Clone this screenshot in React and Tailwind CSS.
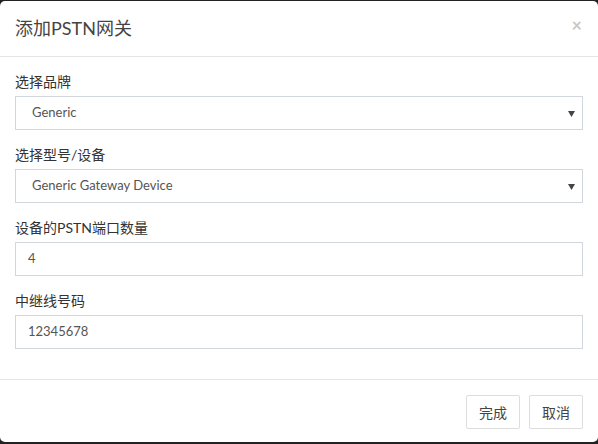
import React from "react";

const font = { fontFamily: '"Lato", "Noto Sans CJK SC", sans-serif' };

function Label({ children }) {
  return <div className="h-[19px] leading-[19px] text-[14px] text-[#333] mb-[5px]">{children}</div>;
}

function Select({ value }) {
  return (
    <div className="h-[34px] border border-[#d2d6de] bg-white flex items-center pl-[16px] pr-[7px]">
      <span className="flex-1 text-[13px] text-[#555]">{value}</span>
      <svg width="7" height="6" viewBox="0 0 7 6" className="mt-[1px]">
        <path d="M0 0H7L3.5 6Z" fill="#444" />
      </svg>
    </div>
  );
}

function Input({ value }) {
  return (
    <div className="h-[34px] border border-[#d2d6de] bg-white flex items-center pl-[12px]">
      <span className="text-[13px] text-[#555]">{value}</span>
    </div>
  );
}

export default function App() {
  return (
    <div className="w-[598px] h-[444px] bg-[#222] pt-[1px] overflow-hidden" style={font}>
      <div className="bg-white rounded-[5px] h-[441px] flex flex-col">
        <div className="h-[56px] border-b border-[#e5e5e5] flex items-center px-[15px]">
          <span className="flex-1 text-[18px] text-[#444]">添加PSTN网关</span>
          <span className="text-[#c8c8c8] text-[18px] leading-none font-bold -mt-[8px] mr-[1px]">×</span>
        </div>
        <div className="p-[15px] flex flex-col gap-[15px] border-b border-[#e5e5e5]">
          <div>
            <Label>选择品牌</Label>
            <Select value="Generic" />
          </div>
          <div>
            <Label>选择型号/设备</Label>
            <Select value="Generic Gateway Device" />
          </div>
          <div>
            <Label>设备的PSTN端口数量</Label>
            <Input value="4" />
          </div>
          <div className="mb-[15px]">
            <Label>中继线号码</Label>
            <Input value="12345678" />
          </div>
        </div>
        <div className="flex justify-end gap-[9px] px-[15px] pt-[15px]">
          <button className="w-[54px] h-[34px] border border-[#ddd] bg-white text-[14px] text-[#444] rounded-[2px]">完成</button>
          <button className="w-[54px] h-[34px] border border-[#ddd] bg-white text-[14px] text-[#444] rounded-[2px]">取消</button>
        </div>
      </div>
    </div>
  );
}
